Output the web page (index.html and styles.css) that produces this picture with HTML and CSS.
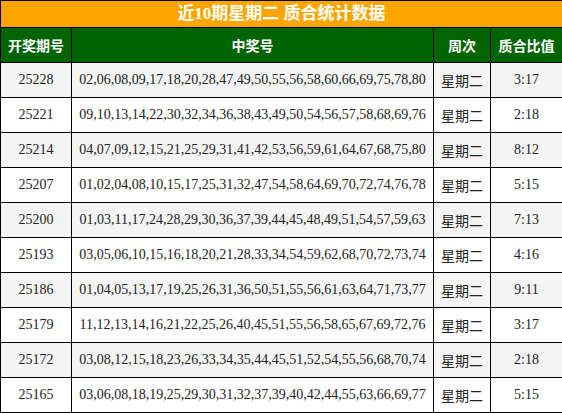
FILE: index.html
```html
<!DOCTYPE html>
<html lang="zh">
<head>
<meta charset="utf-8">
<link rel="stylesheet" href="styles.css">
</head>
<body>
<table class="stats">
  <colgroup>
    <col class="c-issue">
    <col class="c-nums">
    <col class="c-week">
    <col class="c-ratio">
  </colgroup>
  <thead>
    <tr class="title-row"><th colspan="4">近10期星期二 质合统计数据</th></tr>
    <tr class="head-row"><th>开奖期号</th><th>中奖号</th><th>周次</th><th>质合比值</th></tr>
  </thead>
  <tbody>
    <tr><td>25228</td><td>02,06,08,09,17,18,20,28,47,49,50,55,56,58,60,66,69,75,78,80</td><td class="cjk">星期二</td><td>3:17</td></tr>
    <tr><td>25221</td><td>09,10,13,14,22,30,32,34,36,38,43,49,50,54,56,57,58,68,69,76</td><td class="cjk">星期二</td><td>2:18</td></tr>
    <tr><td>25214</td><td>04,07,09,12,15,21,25,29,31,41,42,53,56,59,61,64,67,68,75,80</td><td class="cjk">星期二</td><td>8:12</td></tr>
    <tr><td>25207</td><td>01,02,04,08,10,15,17,25,31,32,47,54,58,64,69,70,72,74,76,78</td><td class="cjk">星期二</td><td>5:15</td></tr>
    <tr><td>25200</td><td>01,03,11,17,24,28,29,30,36,37,39,44,45,48,49,51,54,57,59,63</td><td class="cjk">星期二</td><td>7:13</td></tr>
    <tr><td>25193</td><td>03,05,06,10,15,16,18,20,21,28,33,34,54,59,62,68,70,72,73,74</td><td class="cjk">星期二</td><td>4:16</td></tr>
    <tr><td>25186</td><td>01,04,05,13,17,19,25,26,31,36,50,51,55,56,61,63,64,71,73,77</td><td class="cjk">星期二</td><td>9:11</td></tr>
    <tr><td>25179</td><td>11,12,13,14,16,21,22,25,26,40,45,51,55,56,58,65,67,69,72,76</td><td class="cjk">星期二</td><td>3:17</td></tr>
    <tr><td>25172</td><td>03,08,12,15,18,23,26,33,34,35,44,45,51,52,54,55,56,68,70,74</td><td class="cjk">星期二</td><td>2:18</td></tr>
    <tr><td>25165</td><td>03,06,08,18,19,25,29,30,31,32,37,39,40,42,44,55,63,66,69,77</td><td class="cjk">星期二</td><td>5:15</td></tr>
  </tbody>
</table>
</body>
</html>
```
FILE: styles.css
```css
html, body {
  margin: 0;
  padding: 0;
  background: #ffffff;
}

.stats {
  border-collapse: collapse;
  table-layout: fixed;
  width: 562px;
  font-family: "Liberation Serif", "Noto Sans CJK SC", serif;
  font-size: 14px;
  color: #222222;
}

.c-issue { width: 71px; }
.c-nums { width: 362px; }
.c-week { width: 57px; }
.c-ratio { width: 72px; }

.stats th,
.stats td {
  border: 1px solid #000000;
  padding: 0;
  text-align: center;
  white-space: nowrap;
}

.title-row th {
  background: #ffa500;
  color: #ffffff;
  font-size: 17px;
  font-weight: bold;
  height: 26px;
  line-height: 26px;
  font-family: "Liberation Serif", "Noto Sans CJK SC", serif;
}

.head-row th {
  background: #006400;
  color: #ffffff;
  font-family: "Noto Sans CJK SC", sans-serif;
  font-size: 14px;
  font-weight: bold;
  height: 34px;
}

.stats td {
  height: 34px;
}

.stats tbody tr:nth-child(odd) td {
  background: #f4f4f4;
}

.stats td.cjk {
  font-family: "Noto Sans CJK SC", sans-serif;
  font-size: 14px;
}
```
